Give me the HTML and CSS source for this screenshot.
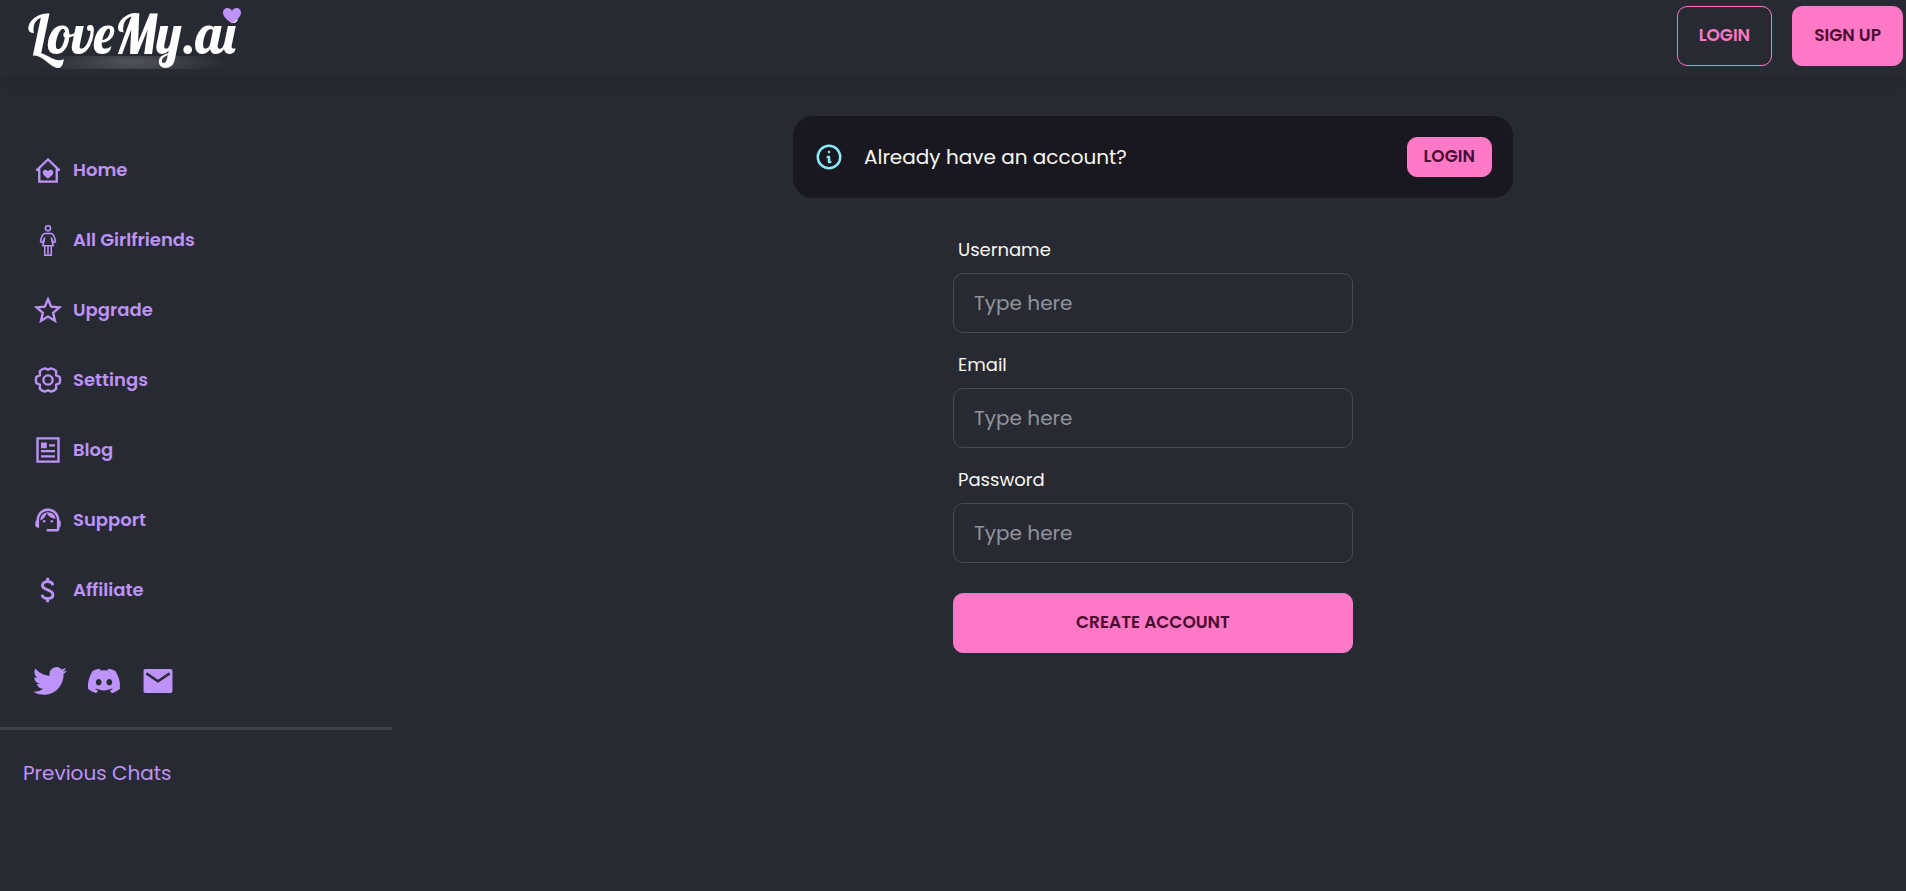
FILE: index.html
```html
<!DOCTYPE html>
<html lang="en">
<head>
<meta charset="utf-8">
<meta name="viewport" content="width=device-width, initial-scale=1">
<title>LoveMy.ai</title>
<link rel="stylesheet" href="styles.css">
</head>
<body>
<header class="navbar">
  <a class="logo" href="#" aria-label="LoveMy.ai">
    <span class="logo-text">LoveMy.ai</span>
    <svg class="logo-heart" viewBox="0 0 18 16" aria-hidden="true"><path d="M9 15.500C6 13 0 9.500 0 4.800 0 1.500 2.200 0 4.500 0 6.500 0 8 1 9 2.700 10 1 11.500 0 13.500 0 15.800 0 18 1.500 18 4.800 18 9.500 12 13 9 15.500Z"/></svg>
  </a>
  <div class="navbar-actions">
    <button class="btn btn-outline" type="button">LOGIN</button>
    <button class="btn" type="button">SIGN UP</button>
  </div>
</header>
<div class="layout">
  <aside class="sidebar">
    <nav class="menu">
      <a class="menu-item" href="#">
        <svg class="icon" viewBox="0 0 24 24"><path class="line" d="M2 12.500 12 3l10 9.500M4.500 11v11h15V11"/><path d="M12 19.500c-2-1.700-4.500-3.200-4.500-5.600 0-2.500 3.300-3 4.500-.8 1.200-2.200 4.500-1.700 4.500.8 0 2.400-2.500 3.900-4.500 5.600Z"/></svg>
        Home</a>
      <a class="menu-item" href="#">
        <svg class="icon" viewBox="0 0 24 24"><g class="line thin"><circle cx="12" cy="2" r="2.200"/><path d="M9.500 6.500h5c2.200 0 3.400 3.500 3.900 7l-1.700.7-2-4.200 1.800 7H7.500l1.800-7-2 4.200-1.700-.7c.5-3.500 1.700-7 3.900-7ZM9.200 17v8H12v-8m0 8h2.800v-8"/></g></svg>
        All Girlfriends</a>
      <a class="menu-item" href="#">
        <svg class="icon" viewBox="0 0 24 24"><path class="line" d="m12 2.800 2.700 6.400 7 .6-5.300 4.600 1.600 6.900-6-3.700-6 3.700 1.600-6.900-5.300-4.600 7-.6Z"/></svg>
        Upgrade</a>
      <a class="menu-item" href="#">
        <svg class="icon" viewBox="0 0 24 24"><g class="line round"><path d="M21.900 9.200q1.100 2.800 0 5.600L18.900 16 19 19.500q-1.500 2-4.500 2.500L12 20.800 9.500 22Q6.500 21.500 5 19.500L5.100 16 2.100 14.800q-1.100-2.800 0-5.600L5.100 8 5 4.500Q6.500 2.500 9.500 2L12 3.200 14.500 2q3 .5 4.500 2.500L18.900 8Z"/><circle cx="12" cy="12" r="4"/></g></svg>
        Settings</a>
      <a class="menu-item" href="#">
        <svg class="icon" viewBox="0 0 24 24"><path class="line" d="M3 2h18v20H3Z"/><path d="M6 5.500h5v5H6Zm7 1.500h5v2h-5Zm-7 5h12v2H6Zm0 4.500h12v2H6Z"/></svg>
        Blog</a>
      <a class="menu-item" href="#">
        <svg class="icon" viewBox="1 1 22 22"><path d="M21 12.220C21 6.730 16.740 3 12 3c-4.690 0-9 3.650-9 9.280-.6.340-1 .98-1 1.720v2c0 1.100.9 2 2 2h1v-6.100c0-3.870 3.130-7 7-7s7 3.130 7 7V19h-8v2h8c1.100 0 2-.9 2-2v-1.220c.59-.31 1-.92 1-1.640v-2.300c0-.7-.41-1.310-1-1.620Z"/><circle cx="9" cy="13" r="1"/><circle cx="15" cy="13" r="1"/><path d="M18 11.030C17.520 8.180 15.040 6 12.050 6c-3.030 0-6.290 2.510-6.030 6.450 2.470-1.010 4.330-3.210 4.860-5.890 1.310 2.630 4 4.440 7.120 4.470Z"/></svg>
        Support</a>
      <a class="menu-item" href="#">
        <svg class="icon" viewBox="0 0 24 24"><path class="line wide" d="M16 8c0-2-1.600-3.200-4.200-3.200S7.200 6 7.200 8c0 4.800 9 3 9 8 0 2-1.800 3.200-4.400 3.200S7 18 7 16M11.700 1.500V5m0 14v3.500"/></svg>
        Affiliate</a>
    </nav>
    <div class="socials">
      <a href="#" aria-label="Twitter"><svg class="social" viewBox="0 0 24 24"><path d="M23.953 4.570a10 10 0 0 1-2.825.775 4.958 4.958 0 0 0 2.163-2.723c-.951.555-2.005.959-3.127 1.184a4.920 4.920 0 0 0-8.384 4.482C7.690 8.095 4.067 6.130 1.640 3.162a4.822 4.822 0 0 0-.666 2.475c0 1.710.870 3.213 2.188 4.096a4.904 4.904 0 0 1-2.228-.616v.060a4.923 4.923 0 0 0 3.946 4.827 4.996 4.996 0 0 1-2.212.085 4.936 4.936 0 0 0 4.604 3.417 9.867 9.867 0 0 1-6.102 2.105c-.390 0-.779-.023-1.170-.067a13.995 13.995 0 0 0 7.557 2.209c9.053 0 13.998-7.496 13.998-13.985 0-.210 0-.420-.015-.630A9.935 9.935 0 0 0 24 4.590Z"/></svg></a>
      <a href="#" aria-label="Discord"><svg class="social" viewBox="-.5 -.5 17 17"><path d="M13.545 2.907a13.227 13.227 0 0 0-3.257-1.011.050.050 0 0 0-.052.025c-.141.250-.297.577-.406.833a12.190 12.190 0 0 0-3.658 0 8.258 8.258 0 0 0-.412-.833.051.051 0 0 0-.052-.025c-1.125.194-2.220.534-3.257 1.011C.356 6.024-.213 9.047.066 12.032c1.200.9 2.500 1.600 4.016 2.057.300-.4.600-.9.874-1.348l-1.276-.665.263-.280c2.619 1.196 5.454 1.196 8.094 0l.263.280-1.275.665c.240.465.515.909.870 1.348 1.400-.420 2.800-1.100 4.025-2.057.334-3.451-.559-6.449-2.375-9.125Zm-8.198 7.307c-.789 0-1.438-.724-1.438-1.612 0-.889.637-1.613 1.438-1.613.807 0 1.450.730 1.438 1.613 0 .888-.637 1.612-1.438 1.612Zm5.316 0c-.788 0-1.438-.724-1.438-1.612 0-.889.637-1.613 1.438-1.613.807 0 1.451.730 1.438 1.613 0 .888-.631 1.612-1.438 1.612Z"/></svg></a>
      <a href="#" aria-label="Email"><svg class="social" viewBox="0 0 24 24"><path d="M3 3.500h18a1.200 1.200 0 0 1 1.200 1.200v14.600a1.200 1.200 0 0 1-1.200 1.200H3a1.200 1.200 0 0 1-1.200-1.200V4.700A1.200 1.200 0 0 1 3 3.500Zm9 9.700 8.700-5.800-.9-1.500-7.800 5.200-7.800-5.200-.9 1.500Z"/></svg></a>
    </div>
    <section class="history"><h2 class="history-title">Previous Chats</h2></section>
  </aside>
  <main class="content">
    <div class="alert">
      <svg class="info" viewBox="0 0 24 24" aria-hidden="true"><path d="M13 16h-1v-4h-1m1-4h.01M21 12a9 9 0 1 1-18 0 9 9 0 0 1 18 0Z"/></svg>
      <span class="alert-text">Already have an account?</span>
      <button class="btn btn-small" type="button">LOGIN</button>
    </div>
    <form class="form">
      <div class="field"><label class="label" for="username">Username</label><input class="input" id="username" type="text" placeholder="Type here"></div>
      <div class="field"><label class="label" for="email">Email</label><input class="input" id="email" type="email" placeholder="Type here"></div>
      <div class="field"><label class="label" for="password">Password</label><input class="input" id="password" type="password" placeholder="Type here"></div>
      <button class="btn btn-submit" type="submit">CREATE ACCOUNT</button>
    </form>
  </main>
</div>
</body>
</html>
```
FILE: styles.css
```css
* { box-sizing: border-box; }

body {
  margin: 0;
  min-height: 100vh;
  background: #282a33;
  color: #f8f8f2;
  font-family: Poppins, Inter, sans-serif;
  font-size: 20px;
  line-height: 30px;
}

a { color: inherit; text-decoration: none; }

.navbar {
  display: flex;
  justify-content: space-between;
  align-items: center;
  padding: 6px 3px 10px 28px;
  box-shadow: 0 12px 14px -5px #24262e;
}

.logo {
  position: relative;
  display: block;
  padding-bottom: 4px;
  color: #fff;
}

.logo::before {
  content: "";
  position: absolute;
  left: 10px;
  right: 10px;
  bottom: -3px;
  height: 13px;
  background: radial-gradient(50% 120%, #52545c, #282a33);
}

.logo-text {
  position: relative;
  display: block;
  font-family: Lobster, "Liberation Serif", serif;
  font-size: 54px;
  font-weight: 400;
  line-height: 56px;
}

.logo-heart {
  position: absolute;
  top: 2px;
  right: -5px;
  width: 18px;
  height: 16px;
  fill: #bd93f9;
}

.navbar-actions { display: flex; gap: 20px; }

.btn {
  height: 60px;
  padding: 0 21px 2px;
  border: 1px solid #ff79c6;
  border-radius: 10px;
  background: #ff79c6;
  color: #4a0d32;
  font-family: inherit;
  font-size: 17px;
  font-weight: 600;
  line-height: 20px;
  cursor: pointer;
}

.btn-outline { background: transparent; color: #ff79c6; }

.btn-small { height: 40px; padding: 0 16px 2px; }

.layout { display: flex; }

.sidebar { flex: none; width: 400px; padding-top: 59px; color: #bd93f9; }

.menu-item {
  display: flex;
  align-items: center;
  gap: 11px;
  height: 70px;
  padding-left: 34px;
  font-size: 18px;
  font-weight: 600;
}

.icon { width: 28px; height: 28px; fill: currentColor; overflow: visible; }

.line { fill: none; stroke: currentColor; stroke-width: 2; }
.thin { stroke-width: 1.3; }
.wide { stroke-width: 2.5; }
.round { stroke-linejoin: round; }

.socials {
  display: flex;
  gap: 20px;
  margin-right: 8px;
  padding: 39px 0 29px 33px;
  border-bottom: 3px solid #40434c;
}

.socials a { display: flex; }

.social { width: 34px; height: 34px; fill: currentColor; }

.history { padding: 28px 23px; }

.history-title { margin: 0; font-size: 20px; font-weight: 400; line-height: 30px; }

.content {
  flex: 1;
  display: flex;
  flex-direction: column;
  align-items: center;
  padding-top: 40px;
}

.alert {
  display: flex;
  align-items: center;
  width: 100%;
  max-width: 720px;
  padding: 21px;
  border-radius: 20px;
  background: #191821;
}

.info {
  width: 30px;
  height: 30px;
  margin-right: 20px;
  fill: none;
  stroke: #8be9fd;
  stroke-width: 2;
  stroke-linecap: round;
  stroke-linejoin: round;
}

.alert-text { flex: 1; }

.form { width: 100%; max-width: 400px; padding-top: 35px; }

.field { display: flex; flex-direction: column; margin-bottom: 15px; }

.label { padding: 2px 5px 8px; font-size: 18px; line-height: 30px; }

.input {
  width: 100%;
  height: 60px;
  padding: 0 20px;
  border: 1px solid #494b53;
  border-radius: 10px;
  background: transparent;
  color: inherit;
  font-family: inherit;
  font-size: 20px;
}

.input::placeholder { color: #91939a; opacity: 1; }

.btn-submit { width: 100%; margin-top: 15px; }
```
